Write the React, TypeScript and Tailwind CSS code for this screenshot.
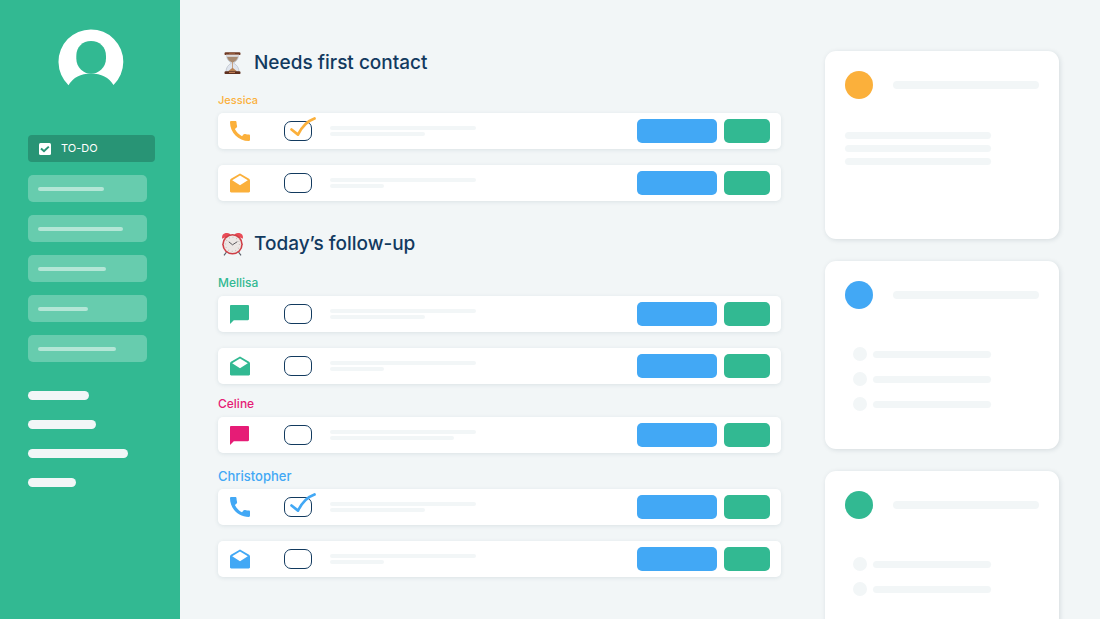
import { useState } from "react";

type IconName = "phone" | "mail" | "chat";

type Task = {
   icon: IconName;
   done?: boolean;
   line: string;
};

type Contact = {
   name: string;
   color: string;
   label: string;
   spacing: string;
   tasks: Task[];
};

const firstContact: Contact[] = [
   {
      name: "Jessica",
      color: "text-[#fbb03b]",
      label: "text-[11px]",
      spacing: "mt-[13px]",
      tasks: [
         { icon: "phone", done: true, line: "w-[95px]" },
         { icon: "mail", line: "w-[54px]" },
      ],
   },
];

const followUp: Contact[] = [
   {
      name: "Mellisa",
      color: "text-[#32b992]",
      label: "text-xs",
      spacing: "mt-[15px]",
      tasks: [
         { icon: "chat", line: "w-[95px]" },
         { icon: "mail", line: "w-[54px]" },
      ],
   },
   {
      name: "Celine",
      color: "text-[#e61c76]",
      label: "text-xs",
      spacing: "mt-2.5",
      tasks: [{ icon: "chat", line: "w-[124px]" }],
   },
   {
      name: "Christopher",
      color: "text-[#42a8f5]",
      label: "text-[13px]",
      spacing: "mt-[13px]",
      tasks: [
         { icon: "phone", done: true, line: "w-[95px]" },
         { icon: "mail", line: "w-[54px]" },
      ],
   },
];

const navLines = ["w-[66px]", "w-[85px]", "w-[68px]", "w-[50px]", "w-[78px]"];
const footerLines = ["w-[61px]", "w-[68px]", "w-[100px]", "w-12"];

function Avatar() {
   return (
      <svg viewBox="58 29 66 58" className="h-[58px] w-[66px]" aria-hidden="true">
         <path
            d="M68.5 85.2A32.4 32.4 0 1 1 113.5 85Q106.5 73.4 91 73.4Q75.5 73.4 68.5 85.2Z"
            fill="#fff"
         />
         <path
            d="M91 41C99.5 41 106 47 106 56V58.5C106 67.5 98.5 73.8 91 73.8S76.3 67.5 76.3 58.5V56C76.3 47 82.5 41 91 41Z"
            fill="#32b992"
         />
      </svg>
   );
}

function Hourglass() {
   return (
      <svg viewBox="0 0 24 24" className="size-6" aria-hidden="true">
         <path
            d="M5.500 3.500C5.500 8 7 9.800 10.500 12C7 14.200 5 16.500 5 21H18C18 16.500 16 14.200 12.500 12C16 9.800 17.500 8 17.500 3.500Z"
            fill="#dfe5ee"
            stroke="#b9bec8"
            strokeWidth="0.7"
         />
         <path d="M6 5.800H17C16.500 8.500 15 9.800 12.300 11.300H10.700C8 9.800 6.500 8.500 6 5.800Z" fill="#a88a70" />
         <path d="M11.200 11H11.900V17L16.500 20.800H6.500L11.200 17Z" fill="#b98252" />
         <rect x="3.500" y="1.300" width="16" height="2.800" rx="1.200" fill="#703b25" />
         <rect x="5" y="3.600" width="13" height="1" fill="#e4d9d2" />
         <rect x="3.500" y="20.300" width="16" height="2.800" rx="1.200" fill="#5f301f" />
         <path d="M8 21.500H14" stroke="#c8855b" strokeWidth="0.9" />
         <path d="M8 2.400H14" stroke="#a66743" strokeWidth="0.8" />
      </svg>
   );
}

function AlarmClock() {
   return (
      <svg viewBox="0 0 24 24" className="size-6" aria-hidden="true">
         <path d="M5.500 20L3 23.300M17.500 20L20 23.300" stroke="#59606b" strokeWidth="1.200" />
         <path d="M1.200 6.800C.4 3.300 2.500.9 6.200 1.100C7.900 1.200 9 2 9.500 3Z" fill="#e94b56" />
         <path d="M21.800 6.800C22.600 3.300 20.500.9 16.800 1.100C15.100 1.200 14 2 13.500 3Z" fill="#e94b56" />
         <circle cx="11.500" cy="12.300" r="10.300" fill="#cf3d45" />
         <circle cx="11.500" cy="12.300" r="8.700" fill="#ece7e5" />
         <circle
            cx="11.500"
            cy="12.300"
            r="7"
            fill="none"
            stroke="#c0aeac"
            strokeWidth="1.300"
            strokeDasharray="0.6 3.065"
         />
         <path d="M7.800 9.800L11.500 12.800L16.300 9.700" fill="none" stroke="#4b4b4f" strokeWidth="0.9" />
      </svg>
   );
}

function TaskIcon({ name }: { name: IconName }) {
   if (name === "phone") {
      return (
         <svg viewBox="3 3 18 18" className="size-5" fill="currentColor" aria-hidden="true">
            <path d="M20.1 15.2c-1.2 0-2.300-.2-3.400-.5a1.500 1.500 0 0 0-1.400.3l-1.500 1.700c-2.700-1.350-5-3.600-6.400-6.400l1.600-1.500c.4-.4.5-.9.350-1.400-.3-1.100-.5-2.200-.5-3.300C8.850 3.400 8.400 3 7.800 3H4.100C3.500 3 3 3.400 3 4.100 3 13.400 10.600 21 19.900 21c.7 0 1.100-.5 1.100-1.100v-3.700c0-.6-.4-1-.9-1z" />
         </svg>
      );
   }
   if (name === "mail") {
      return (
         <svg viewBox="2 1 20 19" className="size-5" fill="currentColor" aria-hidden="true">
            <path d="M22 8c0-.72-.37-1.350-.94-1.700L12 1 2.950 6.300C2.380 6.650 2 7.280 2 8v10.800c0 .7.500 1.200 1.200 1.200h17.600c.7 0 1.200-.5 1.200-1.200V8zM12 12.800 4.200 7.840 12 3l7.800 4.840L12 12.800z" />
         </svg>
      );
   }
   return (
      <svg viewBox="2 2 20 20" className="size-[19px]" fill="currentColor" aria-hidden="true">
         <path d="M20.800 2H3.200C2.500 2 2 2.500 2 3.200V22l4-4h14.800c.7 0 1.200-.5 1.200-1.200V3.200C22 2.500 21.500 2 20.800 2z" />
      </svg>
   );
}

function TaskRow({ task, contact }: { task: Task; contact: Contact }) {
   const [checked, setChecked] = useState(Boolean(task.done));

   return (
      <li className="flex h-9 items-center rounded-[5px] bg-white pr-[11px] pl-3 shadow-[0_1px_4px_rgba(20,60,80,0.10)]">
         <span className={`w-5 ${contact.color}`}>
            <TaskIcon name={task.icon} />
         </span>
         <label className={`relative ml-[34px] flex ${contact.color}`}>
            <input
               type="checkbox"
               aria-label={`${contact.name} ${task.icon}`}
               checked={checked}
               onChange={(e) => setChecked(e.target.checked)}
               className="h-5 w-7 appearance-none rounded-[7px] border border-[#123a5f] bg-white"
            />
            {checked && (
               <svg
                  viewBox="0 0 28 21"
                  className="pointer-events-none absolute -top-1 left-1 h-[21px] w-7"
                  aria-hidden="true"
               >
                  <path
                     d="M3.500 12.500L10 17.600C13 11.500 18 4.500 26.500 1.500"
                     fill="none"
                     stroke="currentColor"
                     strokeWidth="2.700"
                     strokeLinecap="round"
                     strokeLinejoin="round"
                  />
               </svg>
            )}
         </label>
         <div className="ml-[18px] flex flex-1 flex-col gap-0.5">
            <div className="h-1 w-[146px] rounded-sm bg-[#f2f6f7]" />
            <div className={`h-1 rounded-sm bg-[#f2f6f7] ${task.line}`} />
         </div>
         <div className="flex gap-[7px]">
            <button
               type="button"
               aria-label="Open"
               className="h-6 w-20 rounded-[5px] bg-[#42a8f5]"
            />
            <button
               type="button"
               aria-label="Done"
               className="h-6 w-[46px] rounded-[5px] bg-[#32b992]"
            />
         </div>
      </li>
   );
}

function ContactGroup({ contact }: { contact: Contact }) {
   return (
      <div className={contact.spacing}>
         <h3 className={`leading-5 font-medium ${contact.label} ${contact.color}`}>
            {contact.name}
         </h3>
         <ul className="mt-[3px] flex flex-col gap-4">
            {contact.tasks.map((task, i) => (
               <TaskRow key={i} task={task} contact={contact} />
            ))}
         </ul>
      </div>
   );
}

function SectionTitle({ icon, children }: { icon: React.ReactNode; children: string }) {
   return (
      <h2 className="flex items-center gap-[9px] pl-[3px] text-[19px] leading-7 font-medium text-[#123a5f]">
         {icon}
         {children}
      </h2>
   );
}

function Sidebar() {
   return (
      <aside className="w-[180px] shrink-0 bg-[#32b992] pt-[29px] pl-7">
         <div className="pl-[30px]">
            <Avatar />
         </div>
         <nav className="mt-12 flex flex-col gap-[13px]">
            <a
               href="#todo"
               className="mr-[25px] flex h-[27px] items-center gap-2.5 rounded-[4px] bg-[#289475] pl-[11px] text-[11px] text-white"
            >
               <svg viewBox="0 0 12 12" className="size-3" aria-hidden="true">
                  <rect width="12" height="12" rx="1.500" fill="#fff" />
                  <path d="M2 5.400L5 8.200L9.800 3.600" fill="none" stroke="#289475" strokeWidth="2" />
               </svg>
               TO-DO
            </a>
            {navLines.map((line, i) => (
               <a
                  key={i}
                  href="#menu"
                  aria-label={`Menu ${i + 1}`}
                  className="mr-[33px] flex h-[27px] items-center rounded-[5px] bg-[#67ccae] pl-2.5"
               >
                  <span className={`h-1 rounded-sm bg-[#b3e6d6] ${line}`} />
               </a>
            ))}
         </nav>
         <div className="mt-[29px] flex flex-col gap-5">
            {footerLines.map((line) => (
               <div key={line} className={`h-[9px] rounded-full bg-[#f2f6f7] ${line}`} />
            ))}
         </div>
      </aside>
   );
}

function InfoCard({ dot, items = 0 }: { dot: string; items?: number }) {
   return (
      <section className="min-h-[188px] shrink-0 rounded-[11px] bg-white p-5 shadow-[1px_1px_5px_rgba(20,50,60,0.13)]">
         <div className="flex items-center gap-5">
            <div className={`size-7 rounded-full ${dot}`} />
            <div className="h-2 flex-1 rounded-full bg-[#f2f6f7]" />
         </div>
         {items > 0 ? (
            <div className="mt-[38px] flex w-3/4 flex-col gap-[11px] pl-2">
               {Array.from({ length: items }, (_, i) => (
                  <div key={i} className="flex items-center gap-1.5">
                     <div className="size-3.5 rounded-full bg-[#f2f6f7]" />
                     <div className="h-[7px] flex-1 rounded-full bg-[#f2f6f7]" />
                  </div>
               ))}
            </div>
         ) : (
            <div className="mt-[33px] flex w-3/4 flex-col gap-1.5">
               {[0, 1, 2].map((i) => (
                  <div key={i} className="h-[7px] rounded-full bg-[#f2f6f7]" />
               ))}
            </div>
         )}
      </section>
   );
}

export default function App() {
   return (
      <div className="flex h-screen overflow-hidden bg-[#f2f6f7] font-['Inter',sans-serif]">
         <Sidebar />
         <main className="min-w-0 flex-1 pt-[49px] pl-[38px]">
            <section>
               <SectionTitle icon={<Hourglass />}>Needs first contact</SectionTitle>
               {firstContact.map((contact) => (
                  <ContactGroup key={contact.name} contact={contact} />
               ))}
            </section>
            <section className="mt-[29px]">
               <SectionTitle icon={<AlarmClock />}>Today’s follow-up</SectionTitle>
               {followUp.map((contact) => (
                  <ContactGroup key={contact.name} contact={contact} />
               ))}
            </section>
         </main>
         <div className="mr-[41px] ml-11 flex w-[234px] shrink-0 flex-col gap-[22px] pt-[51px]">
            <InfoCard dot="bg-[#fbb03b]" />
            <InfoCard dot="bg-[#42a8f5]" items={3} />
            <InfoCard dot="bg-[#32b992]" items={2} />
         </div>
      </div>
   );
}
